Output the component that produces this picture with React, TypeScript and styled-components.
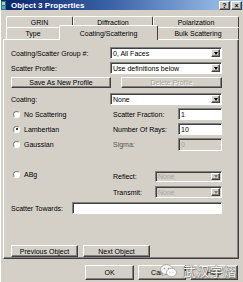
import React from "react";
import styled, { createGlobalStyle, css } from "styled-components";

const GlobalStyle = createGlobalStyle`
  html, body {
    margin: 0;
    padding: 0;
    background: #d4d0c8;
  }
  body {
    font-family: "Liberation Sans", Arial, sans-serif;
    font-size: 7px;
    color: #000;
  }
`;

const raised = css`
  border-top: 1px solid #fff;
  border-left: 1px solid #fff;
  border-right: 1px solid #404040;
  border-bottom: 1px solid #404040;
  box-shadow: inset -1px -1px 0 #808080;
`;

const sunken = css`
  border-top: 1px solid #808080;
  border-left: 1px solid #808080;
  border-right: 1px solid #fff;
  border-bottom: 1px solid #fff;
  box-shadow: inset 1px 1px 0 #404040;
`;

const Window = styled.div`
  position: relative;
  width: 243px;
  height: 282px;
  overflow: hidden;
  background: #d4d0c8;
  display: flex;
  flex-direction: column;
  box-sizing: border-box;
  border-left: 1px solid #fff;
`;

const TitleBar = styled.div`
  height: 10px;
  display: flex;
  align-items: center;
  padding-right: 1px;
  background: linear-gradient(90deg, #0a246a 0%, #3a62a6 45%, #a6caf0 100%);
`;

const TitleText = styled.span`
  margin-left: 5px;
  font-size: 8px;
  font-weight: bold;
  color: #fff;
  white-space: nowrap;
`;

const TitleButtons = styled.div`
  margin-left: auto;
  display: flex;
  gap: 1px;
`;

const TitleButton = styled.div`
  width: 9px;
  height: 7px;
  ${raised};
  background: #d4d0c8;
  font-size: 7px;
  font-weight: bold;
  line-height: 7px;
  text-align: center;
`;

const Tabs = styled.div`
  margin: 6px 0 0 5px;
  width: 233px;
  display: flex;
  flex-direction: column;
`;

const TabRow = styled.div<{ $h: number }>`
  height: ${(p) => p.$h}px;
  display: flex;
  align-items: flex-end;
`;

const Tab = styled.div<{ $w: number; $active?: boolean }>`
  position: relative;
  box-sizing: border-box;
  width: ${(p) => p.$w}px;
  height: 100%;
  border-top: 1px solid #fff;
  border-left: 1px solid #fff;
  border-right: 1px solid #404040;
  border-radius: 2px 2px 0 0;
  background: #d4d0c8;
  display: flex;
  align-items: center;
  justify-content: center;
  white-space: nowrap;
  ${(p) =>
    p.$active &&
    css`
      height: calc(100% + 3px);
      margin: 0 -1px -1px;
      width: ${p.$w + 2}px;
      z-index: 2;
    `}
`;

const Panel = styled.div`
  position: relative;
  z-index: 1;
  box-sizing: border-box;
  margin: 0 4px 0 2px;
  height: 220px;
  padding: 0 16px 0 7px;
  ${raised};
  display: flex;
  flex-direction: column;
`;

const Row = styled.div<{ $top: number; $h: number }>`
  margin-top: ${(p) => p.$top}px;
  height: ${(p) => p.$h}px;
  display: flex;
  align-items: center;
  white-space: nowrap;
`;

const Label = styled.span`
  flex: none;
`;

const FieldLabel = styled.span<{ $dim?: boolean }>`
  margin-left: 2px;
  color: ${(p) => (p.$dim ? "#555" : "#000")};
`;

const SelectBox = styled.div<{ $w: number; $disabled?: boolean }>`
  margin-left: auto;
  box-sizing: border-box;
  width: ${(p) => p.$w}px;
  height: 100%;
  ${sunken};
  background: ${(p) => (p.$disabled ? "#d4d0c8" : "#fff")};
  color: ${(p) => (p.$disabled ? "#a8a49c" : "#000")};
  display: flex;
  align-items: center;
  padding-left: 2px;
`;

const SelectValue = styled.span`
  flex: 1;
  overflow: hidden;
`;

const DropButton = styled.div`
  box-sizing: border-box;
  width: 9px;
  height: calc(100% - 2px);
  margin-right: 1px;
  ${raised};
  background: #d4d0c8;
  display: flex;
  align-items: center;
  justify-content: center;
`;

const Arrow = styled.div<{ $disabled?: boolean }>`
  width: 0;
  height: 0;
  border-left: 2.5px solid transparent;
  border-right: 2.5px solid transparent;
  border-top: 3px solid ${(p) => (p.$disabled ? "#808080" : "#000")};
`;

const TextBox = styled.div<{ $w: number; $disabled?: boolean }>`
  margin-left: auto;
  box-sizing: border-box;
  width: ${(p) => p.$w}px;
  height: 100%;
  ${sunken};
  background: ${(p) => (p.$disabled ? "#d4d0c8" : "#fff")};
  color: ${(p) => (p.$disabled ? "#a8a49c" : "#000")};
  display: flex;
  align-items: center;
  padding-left: 2px;
`;

const Button = styled.div<{ $w: number; $disabled?: boolean }>`
  box-sizing: border-box;
  width: ${(p) => p.$w}px;
  height: 100%;
  ${raised};
  background: #d4d0c8;
  display: flex;
  align-items: center;
  justify-content: center;
  color: ${(p) => (p.$disabled ? "#a8a49c" : "#000")};
  text-shadow: ${(p) => (p.$disabled ? "1px 1px 0 #fff" : "none")};
  white-space: nowrap;
`;

const ButtonPair = styled.div`
  display: flex;
  justify-content: space-between;
  width: 212px;
  height: 100%;
`;

const RadioCell = styled.div<{ $top?: boolean }>`
  width: 100px;
  flex: none;
  height: 100%;
  display: flex;
  align-items: ${(p) => (p.$top ? "flex-start" : "center")};
  gap: 4px;
  padding-left: 2px;
  box-sizing: border-box;
`;

const RadioCircle = styled.div<{ $checked?: boolean }>`
  position: relative;
  box-sizing: border-box;
  width: 7px;
  height: 7px;
  border-radius: 50%;
  background: #fff;
  border: 1px solid;
  border-color: #808080 #fff #fff #808080;
  flex: none;
  &::after {
    content: "";
    display: ${(p) => (p.$checked ? "block" : "none")};
    position: absolute;
    left: 1.5px;
    top: 1.5px;
    width: 2px;
    height: 2px;
    border-radius: 50%;
    background: #000;
  }
`;

const BottomRow = styled.div`
  margin-top: auto;
  margin-bottom: 1px;
  height: 12px;
  display: flex;
  gap: 5px;
`;

const DialogButtons = styled.div`
  margin-top: 6px;
  height: 15px;
  display: flex;
  justify-content: flex-end;
  gap: 4px;
  padding-right: 5px;
`;

const Watermark = styled.div`
  position: absolute;
  left: 159px;
  top: 261px;
  display: flex;
  align-items: center;
  gap: 6px;
  pointer-events: none;
`;

const WatermarkText = styled.span`
  font-family: "Noto Sans CJK SC", sans-serif;
  font-size: 13px;
  letter-spacing: 0.5px;
  color: rgba(255, 255, 255, 0.92);
  text-shadow: 0 0 1px #707070, 0 0 1px #707070, 1px 1px 1px rgba(0, 0, 0, 0.35);
`;

const Select = ({ value, w, disabled }: { value: string; w: number; disabled?: boolean }) => (
  <SelectBox $w={w} $disabled={disabled}>
    <SelectValue>{value}</SelectValue>
    <DropButton>
      <Arrow $disabled={disabled} />
    </DropButton>
  </SelectBox>
);

const Radio = ({ label, checked, top }: { label?: string; checked?: boolean; top?: boolean }) => (
  <RadioCell $top={top}>
    {label && <RadioCircle $checked={checked} />}
    {label && <span>{label}</span>}
  </RadioCell>
);

const App = () => {
  return (
    <>
      <GlobalStyle />
      <Window>
        <TitleBar>
          <svg width="5" height="9" viewBox="0 0 5 9">
            <rect x="0" y="0" width="5" height="9" fill="#2f7f6f" />
            <rect x="1" y="1" width="3" height="3" fill="#9fd0c0" />
            <rect x="1" y="5" width="3" height="3" fill="#5aa0e0" />
          </svg>
          <TitleText>Object 3 Properties</TitleText>
          <TitleButtons>
            <TitleButton>?</TitleButton>
            <TitleButton>×</TitleButton>
          </TitleButtons>
        </TitleBar>

        <Tabs>
          <TabRow $h={11}>
            <Tab $w={67}>GRIN</Tab>
            <Tab $w={80}>Diffraction</Tab>
            <Tab $w={86}>Polarization</Tab>
          </TabRow>
          <TabRow $h={12}>
            <Tab $w={54}>Type</Tab>
            <Tab $w={97} $active>
              Coating/Scattering
            </Tab>
            <Tab $w={82}>Bulk Scattering</Tab>
          </TabRow>
        </Tabs>

        <Panel>
          <Row $top={7} $h={12}>
            <Label>Coating/Scatter Group #:</Label>
            <Select value="0, All Faces" w={112} />
          </Row>
          <Row $top={3} $h={12}>
            <Label>Scatter Profile:</Label>
            <Select value="Use definitions below" w={112} />
          </Row>
          <Row $top={3} $h={11}>
            <ButtonPair>
              <Button $w={100}>Save As New Profile</Button>
              <Button $w={101} $disabled>
                Delete Profile
              </Button>
            </ButtonPair>
          </Row>
          <Row $top={5} $h={12}>
            <Label>Coating:</Label>
            <Select value="None" w={112} />
          </Row>
          <Row $top={3} $h={12}>
            <Radio label="No Scattering" />
            <FieldLabel>Scatter Fraction:</FieldLabel>
            <TextBox $w={44}>1</TextBox>
          </Row>
          <Row $top={3} $h={12}>
            <Radio label="Lambertian" checked />
            <FieldLabel>Number Of Rays:</FieldLabel>
            <TextBox $w={44}>10</TextBox>
          </Row>
          <Row $top={3} $h={13}>
            <Radio label="Gaussian" />
            <FieldLabel $dim>Sigma:</FieldLabel>
            <TextBox $w={44} $disabled>
              0
            </TextBox>
          </Row>
          <Row $top={20} $h={11}>
            <Radio label="ABg" top />
            <FieldLabel>Reflect:</FieldLabel>
            <Select value="None" w={67} disabled />
          </Row>
          <Row $top={4} $h={12}>
            <Radio />
            <FieldLabel>Transmit:</FieldLabel>
            <Select value="None" w={67} disabled />
          </Row>
          <Row $top={4} $h={12}>
            <Label>Scatter Towards:</Label>
            <TextBox $w={150} />
          </Row>
          <BottomRow>
            <Button $w={67}>Previous Object</Button>
            <Button $w={67}>Next Object</Button>
          </BottomRow>
        </Panel>

        <DialogButtons>
          <Button $w={49}>OK</Button>
          <Button $w={48}>Cancel</Button>
          <Button $w={48}>Help</Button>
        </DialogButtons>

        <Watermark>
          <svg width="17" height="14" viewBox="0 0 17 14">
            <ellipse cx="6.5" cy="5.5" rx="6" ry="5" fill="#f4f4f4" stroke="#9a9a9a" strokeWidth="0.8" />
            <path d="M3 9.5 L2.5 12 L5.5 10" fill="#f4f4f4" stroke="#9a9a9a" strokeWidth="0.6" />
            <ellipse cx="11.5" cy="8.5" rx="5" ry="4.2" fill="#ffffff" stroke="#9a9a9a" strokeWidth="0.8" />
            <circle cx="4.5" cy="4.5" r="0.8" fill="#9a9a9a" />
            <circle cx="8.5" cy="4.5" r="0.8" fill="#9a9a9a" />
            <circle cx="10" cy="8" r="0.6" fill="#9a9a9a" />
            <circle cx="13" cy="8" r="0.6" fill="#9a9a9a" />
          </svg>
          <WatermarkText>武汉宇熠</WatermarkText>
        </Watermark>
      </Window>
    </>
  );
};

export default App;
